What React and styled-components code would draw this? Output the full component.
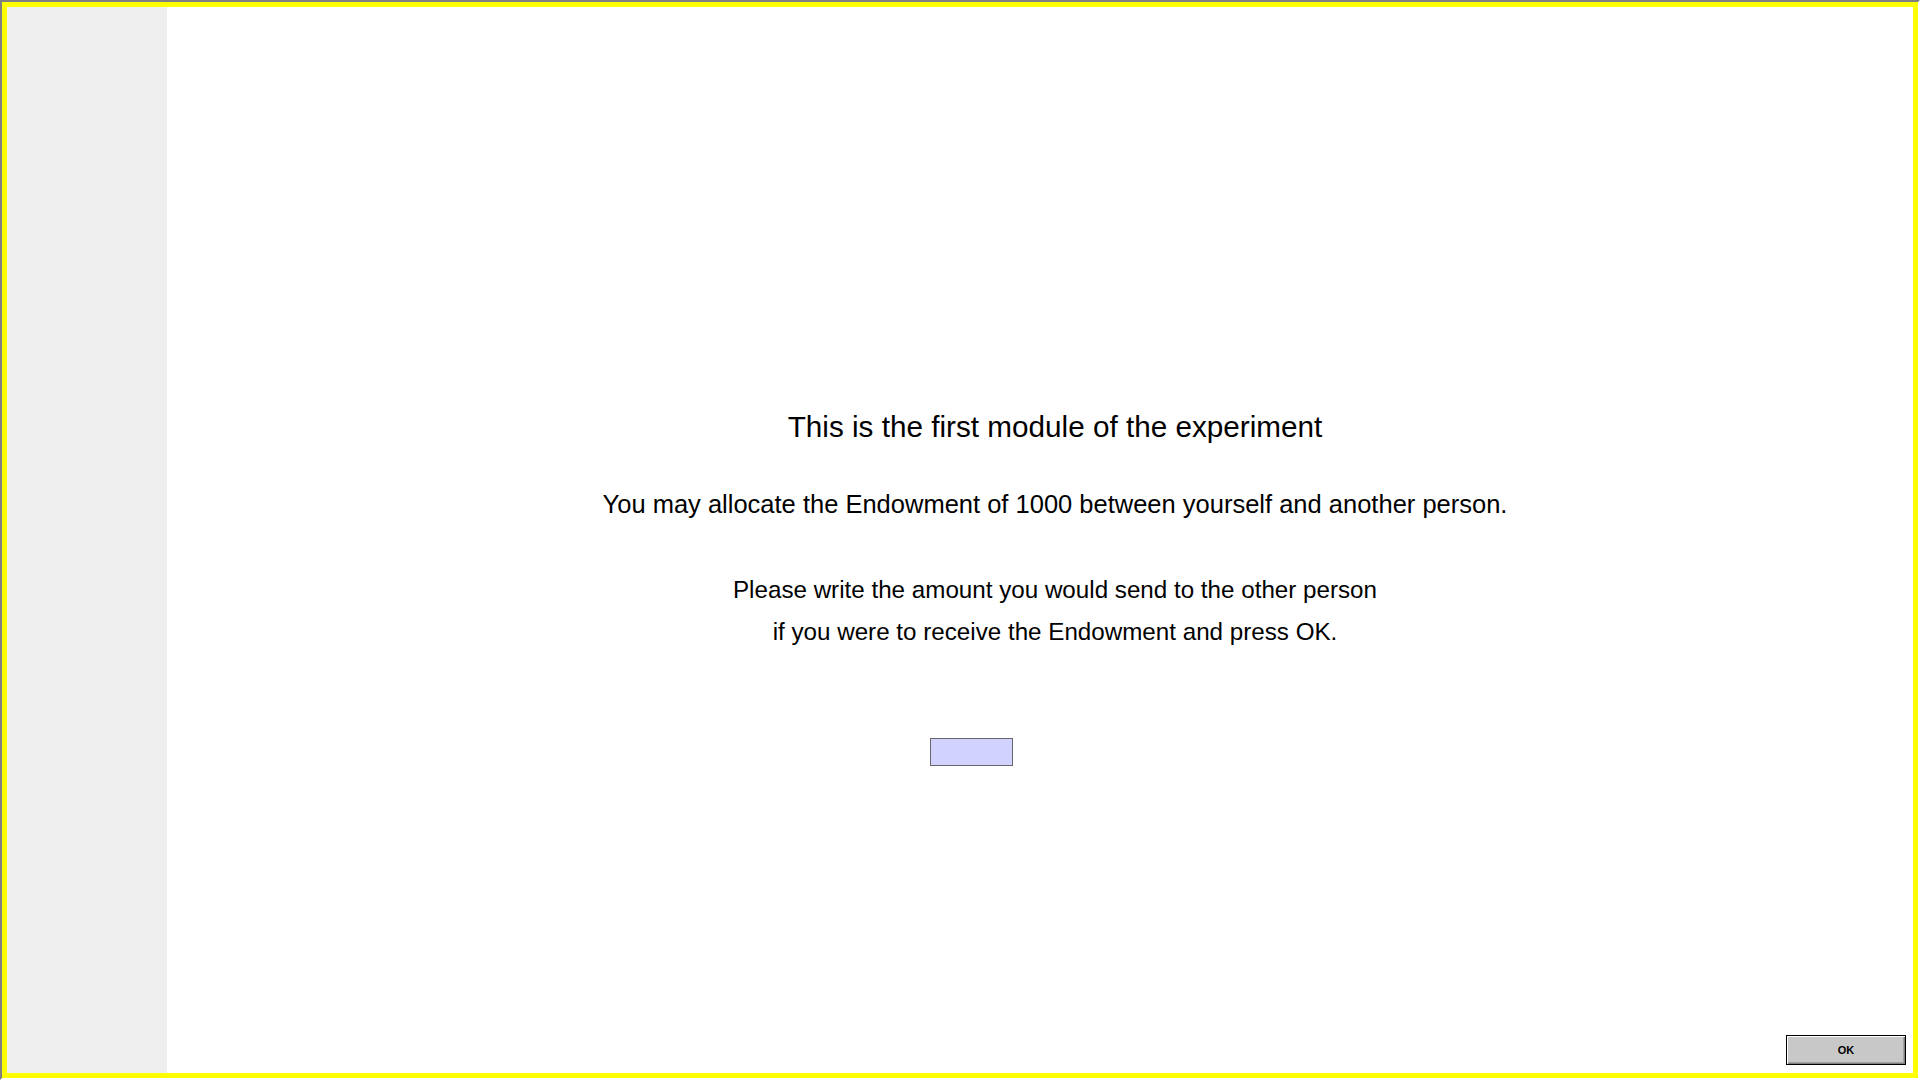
import React from "react";
import styled, { createGlobalStyle } from "styled-components";

const Global = createGlobalStyle`
  html, body { margin: 0; padding: 0; background: #fff; }
  body { font-family: "Liberation Sans", Arial, sans-serif; color: #000; }
  * { box-sizing: border-box; }
`;

const Window = styled.div`
  width: 1920px;
  height: 1080px;
  border-style: solid;
  border-width: 2px;
  border-color: #808080 #ffffff #ffffff #808080;
  display: flex;
`;

const Frame = styled.div`
  flex: 1;
  border: 5px solid #ffff00;
  display: flex;
  min-width: 0;
`;

const Sidebar = styled.aside`
  width: 160px;
  flex: none;
  background: #efefef;
`;

const Main = styled.main`
  flex: 1;
  background: #fff;
  display: flex;
  flex-direction: column;
  padding-top: 402px;
`;

const Content = styled.div`
  display: flex;
  flex-direction: column;
  align-items: center;
  padding-left: 30px;
`;

const Title = styled.h1`
  margin: 0;
  font-size: 29.7px;
  font-weight: 400;
  line-height: 36px;
  text-align: center;
  white-space: nowrap;
`;

const Para = styled.p`
  margin: ${(p) => p.$top}px 0 0;
  font-size: ${(p) => p.$size}px;
  line-height: 42px;
  text-align: center;
  white-space: nowrap;
`;

const InputRow = styled.div`
  display: flex;
  padding-left: 763px;
  margin-top: 85px;
`;

const Amount = styled.input`
  width: 83px;
  height: 28px;
  background: #d2d2ff;
  border: 1px solid #666;
  outline: none;
  padding: 0 4px;
  font-family: "Liberation Sans", Arial, sans-serif;
  font-size: 16px;
`;

const Footer = styled.div`
  margin-top: auto;
  display: flex;
  justify-content: flex-end;
  padding: 0 7px 8px 0;
`;

const OkButton = styled.button`
  width: 120px;
  height: 30px;
  background: #c8c8c8;
  border: 1px solid #000;
  box-shadow: inset 1px 1px 0 #ffffff, inset -1px -1px 0 #808080, inset -2px -2px 0 #a0a0a0;
  font-family: "Liberation Sans", Arial, sans-serif;
  font-size: 11px;
  font-weight: 700;
  color: #000;
  padding: 0;
`;

export default function App() {
  return (
    <>
      <Global />
      <Window>
        <Frame>
          <Sidebar />
          <Main>
            <Content>
              <Title>This is the first module of the experiment</Title>
              <Para $top={38} $size={25.5}>
                You may allocate the Endowment of 1000 between yourself and another person.
              </Para>
              <Para $top={44} $size={24.2}>
                Please write the amount you would send to the other person
                <br />
                if you were to receive the Endowment and press OK.
              </Para>
            </Content>
            <InputRow>
              <Amount type="text" />
            </InputRow>
            <Footer>
              <OkButton>OK</OkButton>
            </Footer>
          </Main>
        </Frame>
      </Window>
    </>
  );
}
